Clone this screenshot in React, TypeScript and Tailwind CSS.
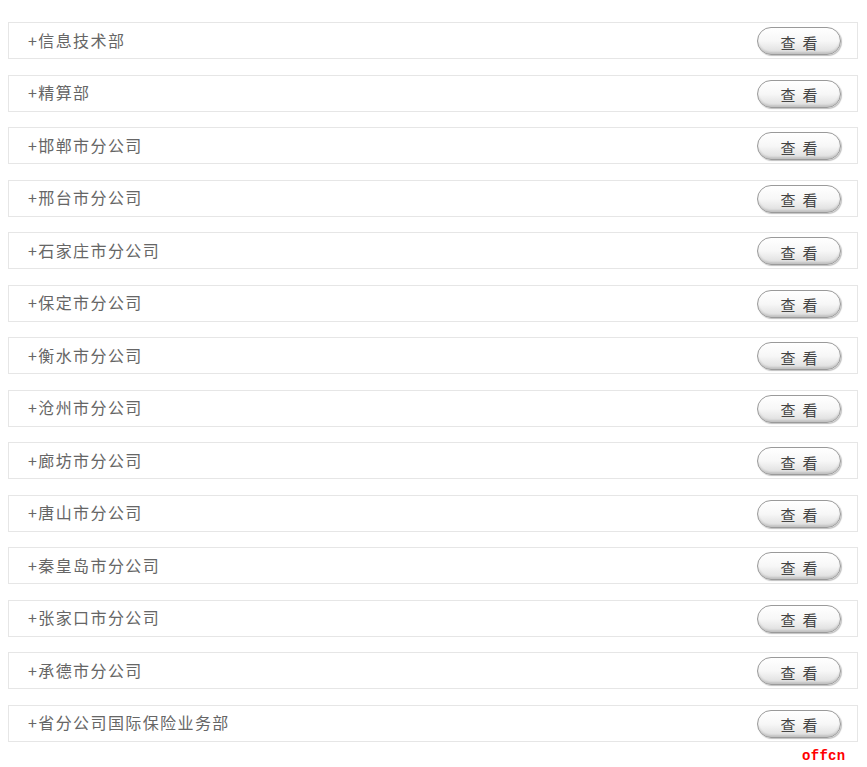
const items = [
  '信息技术部',
  '精算部',
  '邯郸市分公司',
  '邢台市分公司',
  '石家庄市分公司',
  '保定市分公司',
  '衡水市分公司',
  '沧州市分公司',
  '廊坊市分公司',
  '唐山市分公司',
  '秦皇岛市分公司',
  '张家口市分公司',
  '承德市分公司',
  '省分公司国际保险业务部',
];

const ViewButton = () => (
  <button
    type="button"
    className="mt-[1px] flex h-[28px] w-[84px] items-center justify-center gap-[7px] rounded-full border border-[#9a9a9a] bg-gradient-to-b from-white via-[#f7f7f7] to-[#dcdcdc] pt-[2px] text-[15px] leading-none text-[#444] shadow-[inset_0_-2px_2px_rgba(0,0,0,0.12),1px_1px_1px_rgba(0,0,0,0.25)]"
    style={{ fontFamily: '"Noto Sans CJK SC", sans-serif' }}
  >
    <span>查</span>
    <span>看</span>
  </button>
);

export default function App() {
  return (
    <div
      className="relative h-[767px] w-[867px] bg-white pt-[22px]"
      style={{ fontFamily: '"Noto Sans CJK SC", "Liberation Sans", sans-serif' }}
    >
      <div className="ml-[8px] flex w-[850px] flex-col gap-[15.5px]">
        {items.map((name) => (
          <div
            key={name}
            className="flex h-[37px] items-center justify-between border border-[#e6e6e6] pl-[19px] pr-[16px]"
          >
            <span className="-mt-[2px] text-[16px] leading-none tracking-[1.4px] text-[#666]">+{name}</span>
            <ViewButton />
          </div>
        ))}
      </div>
      <div
        className="absolute left-[802px] top-[749px] text-[14px] font-bold leading-none tracking-[0.3px] text-[#ff0000]"
        style={{ fontFamily: '"Liberation Mono", monospace' }}
      >
        offcn
      </div>
    </div>
  );
}
